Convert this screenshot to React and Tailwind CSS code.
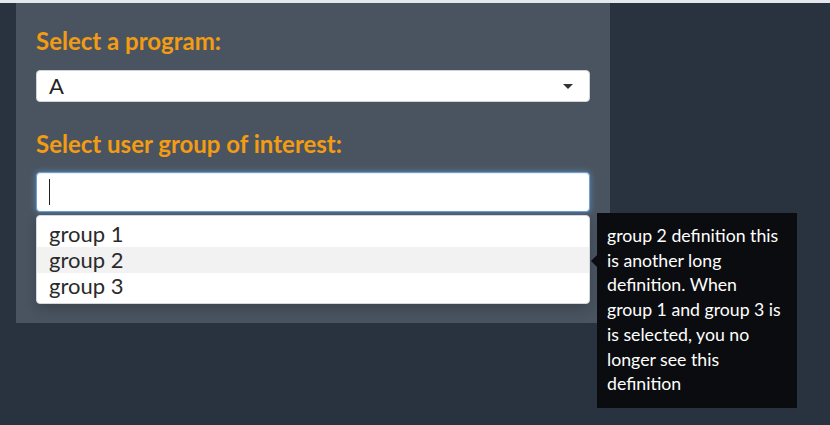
import React from "react";

const groups = ["group 1", "group 2", "group 3"];

const Caret = () => (
  <svg width="10" height="5" viewBox="0 0 10 5" className="block">
    <path d="M0 0 L10 0 L5 5 Z" fill="#333" />
  </svg>
);

export default function App() {
  return (
    <div className="relative w-[830px] h-[425px] bg-[#29333f] overflow-hidden font-['Lato','Open_Sans',sans-serif]">
      <div className="h-[3px] bg-[#e4e7eb]" />
      <div className="pl-4">
        <div className="w-[594px] bg-[#4a5461] px-5 pt-[23px] pb-[19px]">
          <div className="text-[24px] leading-[30px] font-bold text-[#f39c12]">
            Select a program:
          </div>
          <div className="mt-[14px] h-8 bg-white rounded border border-[#cfd3d8] flex items-center justify-between pl-[12px] pr-[16px]">
            <span className="text-[22px] text-[#222] leading-none">A</span>
            <Caret />
          </div>

          <div className="mt-[27px] text-[24px] leading-[30px] font-bold text-[#f39c12]">
            Select user group of interest:
          </div>
          <div className="mt-[13px] h-10 bg-white rounded border border-[#6c9fd6] shadow-[0_0_6px_rgba(102,175,233,0.6),inset_0_1px_1px_rgba(0,0,0,0.075)] flex items-center pl-[12px]">
            <span className="block w-px h-[26px] bg-[#222]" />
          </div>

          <div className="mt-[3px] bg-white rounded border border-[#d5d8dc] py-[5px] pb-1 shadow-[0_6px_12px_rgba(0,0,0,0.18)]">
            {groups.map((g, i) => (
              <div
                key={g}
                className={
                  "h-[26px] leading-[26px] px-[12px] text-[22px] text-[#2a2a2a] " +
                  (i === 1 ? "bg-[#f2f2f2]" : "")
                }
              >
                {g}
              </div>
            ))}
          </div>
        </div>
      </div>

      {/* tooltip for hovered option */}
      <div className="absolute left-[597px] top-[213px] w-[200px] h-[195px] bg-[#0b0c0f] px-[10px] py-[11px] text-white text-[17.7px] leading-[24.7px] whitespace-nowrap">
        <div className="absolute -left-[6px] top-[42px] w-0 h-0 border-y-[6px] border-y-transparent border-r-[6px] border-r-[#0b0c0f]" />
        group 2 definition this
        <br />
        is another long
        <br />
        definition. When
        <br />
        group 1 and group 3 is
        <br />
        is selected, you no
        <br />
        longer see this
        <br />
        definition
      </div>
    </div>
  );
}
